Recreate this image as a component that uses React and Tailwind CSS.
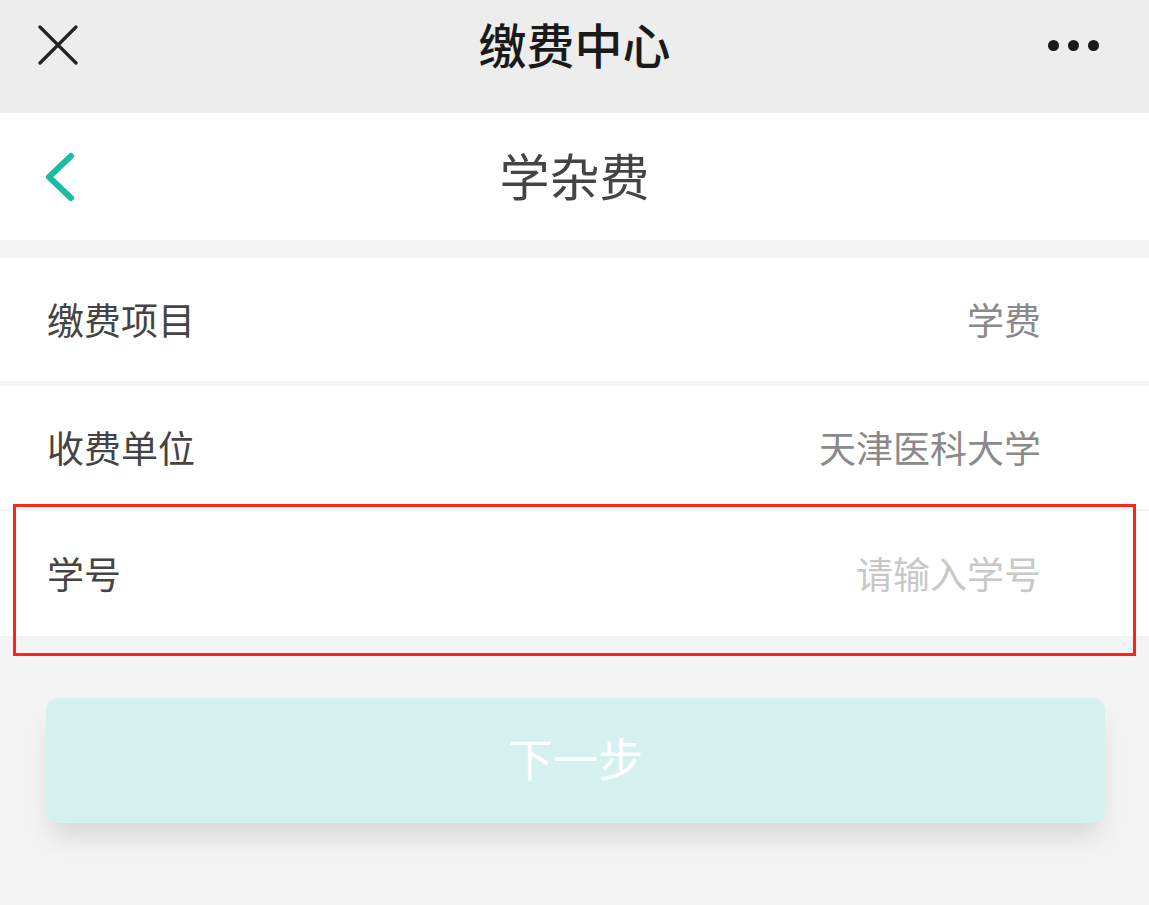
import React from "react";

const rows = [
  { label: "缴费项目", value: "学费", tone: "text-[#8a8a8a]" },
  { label: "收费单位", value: "天津医科大学", tone: "text-[#8a8a8a]" },
];

const App = () => {
  return (
    <div
      className="min-h-screen bg-[#f3f3f3]"
      style={{ fontFamily: '"Noto Sans CJK SC", "Noto Sans", sans-serif' }}
    >
      {/* top bar */}
      <div className="h-[113px] bg-[#ededed] grid grid-cols-[150px_1fr_150px] items-start">
        <div className="pl-[38px] pt-[25px]">
          <svg width="40" height="40" viewBox="0 0 40 40">
            <path d="M2 2 L38 38 M38 2 L2 38" stroke="#222" strokeWidth="3.2" strokeLinecap="round" fill="none" />
          </svg>
        </div>
        <h1 className="text-center text-[48px] leading-none font-medium text-[#1a1a1a] pt-[19px]">
          缴费中心
        </h1>
        <div className="flex justify-end items-center gap-[9px] pr-[50px] pt-[40px]">
          <span className="w-[11px] h-[11px] rounded-full bg-[#1a1a1a]" />
          <span className="w-[11px] h-[11px] rounded-full bg-[#1a1a1a]" />
          <span className="w-[11px] h-[11px] rounded-full bg-[#1a1a1a]" />
        </div>
      </div>

      {/* sub header */}
      <div className="h-[127px] bg-white grid grid-cols-[150px_1fr_150px] items-center">
        <div className="pl-[44px]">
          <svg width="32" height="50" viewBox="0 0 32 50">
            <path d="M27 4 L5 25 L27 46" stroke="#1dbba4" strokeWidth="6" strokeLinecap="round" strokeLinejoin="round" fill="none" />
          </svg>
        </div>
        <h2 className="text-center text-[50px] leading-none text-[#444] -mt-[6px]">学杂费</h2>
        <div />
      </div>

      <div className="h-[18px]" />

      {/* form */}
      <div className="relative">
        {rows.map((r, i) => (
          <div key={r.label}>
            <div className="h-[123px] bg-white flex items-center justify-between px-[47px] pr-[108px]">
              <span className="text-[37px] text-[#444]">{r.label}</span>
              <span className={`text-[37px] ${r.tone}`}>{r.value}</span>
            </div>
            {i === 0 ? (
              <div className="h-[5px] bg-[#f5f5f5]" />
            ) : (
              <div className="h-[2px] bg-[#f4f4f4]" />
            )}
          </div>
        ))}
        <div className="h-[125px] bg-white flex items-center justify-between px-[47px] pr-[108px]">
          <span className="text-[37px] text-[#444]">学号</span>
          <span className="text-[37px] text-[#c8c8c8]">请输入学号</span>
        </div>

        {/* highlight annotation */}
        <div className="absolute left-[13px] top-[246px] w-[1123px] h-[152px] border-[3px] border-[#ff2318] pointer-events-none" />
      </div>

      {/* button */}
      <div className="px-[46px] pt-[62px] pr-[44px]">
        <button className="w-full h-[125px] rounded-[12px] bg-[#d4f1f0] text-white text-[45px] leading-none pb-[6px] shadow-[0_18px_26px_-6px_rgba(0,0,0,0.12)]">
          下一步
        </button>
      </div>
    </div>
  );
};

export default App;
